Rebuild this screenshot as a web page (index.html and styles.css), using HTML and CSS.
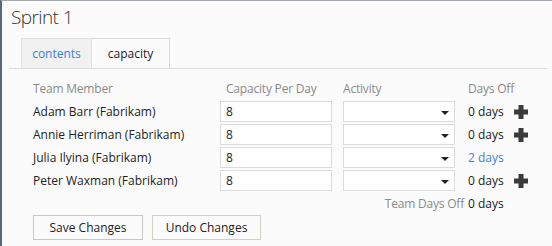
FILE: index.html
```html
<!DOCTYPE html>
<html lang="en">
<head>
    <meta charset="UTF-8">
    <title>Sprint 1</title>
    <link rel="stylesheet" href="styles.css">
</head>
<body>
    <div class="sprint-panel">
        <h1 class="sprint-title">Sprint 1</h1>

        <div class="tabs">
            <div class="tab tab-link">contents</div>
            <div class="tab tab-active">capacity</div>
        </div>

        <div class="capacity-grid">
            <div class="col-head">Team Member</div>
            <div class="col-head col-indent">Capacity Per Day</div>
            <div class="col-head">Activity</div>
            <div class="col-head">Days Off</div>

            <div class="member">Adam Barr (Fabrikam)</div>
            <div><div class="field">8</div></div>
            <div><div class="field select"><span class="arrow"></span></div></div>
            <div class="days">0 days <svg class="plus" width="14" height="14" viewBox="0 0 14 14"><path d="M4.5 0h5v4.5H14v5H9.5V14h-5V9.5H0v-5h4.5z"/></svg></div>

            <div class="member">Annie Herriman (Fabrikam)</div>
            <div><div class="field">8</div></div>
            <div><div class="field select"><span class="arrow"></span></div></div>
            <div class="days">0 days <svg class="plus" width="14" height="14" viewBox="0 0 14 14"><path d="M4.5 0h5v4.5H14v5H9.5V14h-5V9.5H0v-5h4.5z"/></svg></div>

            <div class="member">Julia Ilyina (Fabrikam)</div>
            <div><div class="field">8</div></div>
            <div><div class="field select"><span class="arrow"></span></div></div>
            <div class="days days-link">2 days</div>

            <div class="member">Peter Waxman (Fabrikam)</div>
            <div><div class="field">8</div></div>
            <div><div class="field select"><span class="arrow"></span></div></div>
            <div class="days">0 days <svg class="plus" width="14" height="14" viewBox="0 0 14 14"><path d="M4.5 0h5v4.5H14v5H9.5V14h-5V9.5H0v-5h4.5z"/></svg></div>

            <div class="team-label">Team Days Off</div>
            <div class="days">0 days</div>
        </div>

        <div class="action-buttons">
            <button class="btn btn-save">Save Changes</button>
            <button class="btn btn-undo">Undo Changes</button>
        </div>
    </div>
</body>
</html>
```

FILE: styles.css
```css
* {
    margin: 0;
    padding: 0;
    box-sizing: border-box;
}

html, body {
    height: 100%;
}

body {
    font-family: 'Open Sans', 'Noto Sans', sans-serif;
    font-size: 12px;
    color: #222;
    background-color: #fbfbfb;
    border-top: 1px solid #a3a8ae;
    border-left: 2px solid #5d6878;
    overflow: hidden;
}

.sprint-panel {
    padding-top: 3px;
}

.sprint-title {
    font-size: 19px;
    font-weight: 300;
    letter-spacing: -0.6px;
    line-height: 26px;
    color: #333;
    padding-left: 9px;
    margin-bottom: 8px;
}

.tabs {
    display: flex;
    margin: 0 5px 0 7px;
    padding-left: 12px;
    border-bottom: 1px solid #dadada;
}

.tab {
    height: 30px;
    line-height: 29px;
    text-align: center;
    border: 1px solid #e2e2e2;
    border-bottom: none;
}

.tab-link {
    width: 71px;
    color: #3b7fe0;
    background-color: #f1f1f1;
}

.tab-active {
    width: 78px;
    color: #222;
    background-color: #fbfbfb;
    border-left: none;
    border-color: #d8d8d8;
}

.capacity-grid {
    display: grid;
    grid-template-columns: 187px 123px 125px auto;
    grid-auto-rows: 21px;
    row-gap: 2px;
    align-items: center;
    padding: 9px 0 0 31px;
}

.col-head {
    color: #8a8a8a;
    letter-spacing: -0.2px;
}

.col-indent {
    padding-left: 6px;
}

.field {
    width: 112px;
    height: 21px;
    line-height: 19px;
    padding-left: 5px;
    background-color: #fff;
    border: 1px solid #dcdcdc;
}

.select {
    display: flex;
    align-items: center;
    justify-content: flex-end;
    padding-right: 5px;
}

.arrow {
    width: 0;
    height: 0;
    margin-top: 2px;
    border-left: 4px solid transparent;
    border-right: 4px solid transparent;
    border-top: 4px solid #222;
}

.days {
    display: flex;
    align-items: center;
    gap: 10px;
}

.days-link {
    color: #3b7fe0;
}

.plus {
    fill: #3a3a3a;
}

.team-label {
    grid-column: 3;
    justify-self: end;
    padding-right: 4px;
    color: #8a8a8a;
    letter-spacing: -0.2px;
}

.team-label + .days {
    grid-column: 4;
}

.action-buttons {
    display: flex;
    gap: 9px;
    margin: 1px 0 0 31px;
}

.btn {
    height: 25px;
    font-family: inherit;
    font-size: 12px;
    color: #222;
    background-color: #fbfbfb;
    border: 1px solid #c8c8c8;
}

.btn-save {
    width: 110px;
}

.btn-undo {
    width: 109px;
    border-color: #d2cfc4;
}
```
